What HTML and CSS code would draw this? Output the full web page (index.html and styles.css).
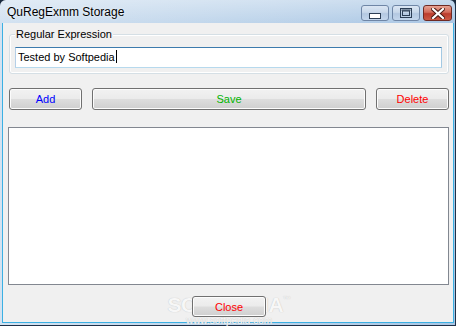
FILE: index.html
```html
<!DOCTYPE html>
<html lang="en">
<head>
    <meta charset="UTF-8">
    <title>QuRegExmm Storage</title>
    <link rel="stylesheet" href="styles.css">
</head>
<body>
    <div class="window">
        <div class="titlebar">
            <span class="title">QuRegExmm Storage</span>
            <div class="caption-buttons">
                <div class="cap-btn">
                    <svg width="12" height="6" viewBox="0 0 12 6"><rect x="0.5" y="0.5" width="11" height="5" fill="#fff" stroke="#2c3e55"/></svg>
                </div>
                <div class="cap-btn">
                    <svg width="12" height="10" viewBox="0 0 12 10"><rect x="0.5" y="0.5" width="11" height="9" fill="none" stroke="#2c3e55"/><rect x="2.5" y="3" width="7" height="4.5" fill="none" stroke="#2c3e55"/><rect x="1.5" y="1.5" width="9" height="1.2" fill="#2c3e55"/></svg>
                </div>
                <div class="cap-btn close-cap">
                    <svg width="14" height="11" viewBox="0 0 14 11"><path d="M2 1 L12 10 M12 1 L2 10" stroke="#4a1a14" stroke-width="4.2" stroke-linecap="square"/><path d="M2 1 L12 10 M12 1 L2 10" stroke="#fff" stroke-width="2.2" stroke-linecap="square"/></svg>
                </div>
            </div>
        </div>

        <div class="client">
            <fieldset class="group">
                <legend>Regular Expression</legend>
                <div class="textbox">Tested by Softpedia<span class="caret"></span></div>
            </fieldset>

            <div class="button-row">
                <button class="btn btn-add">Add</button>
                <button class="btn btn-save">Save</button>
                <button class="btn btn-delete">Delete</button>
            </div>

            <div class="listbox"></div>

            <div class="footer">
                <div class="watermark">
                    <span class="wm-logo">SOFTPEDIA<sup>™</sup></span>
                    <span class="wm-url">www.softpedia.com</span>
                </div>
                <button class="btn btn-close">Close</button>
            </div>
        </div>
    </div>
</body>
</html>
```

FILE: styles.css
```css
body {
    margin: 0;
    background-color: #1b2a3d;
    font-family: "Liberation Sans", Arial, sans-serif;
    font-size: 11px;
}
.window {
    width: 456px;
    height: 326px;
    box-sizing: border-box;
    display: flex;
    flex-direction: column;
    background: linear-gradient(to right, #d3e2f1, #bcd3ea 60%, #a9c6e4);
    border-right: 1px solid #1e3048;
    border-bottom: 1px solid #1e3048;
    border-radius: 6px 6px 0 0;
}
.titlebar {
    height: 23px;
    display: flex;
    align-items: flex-start;
    justify-content: space-between;
    background: linear-gradient(to bottom, rgba(255,255,255,0.35), rgba(255,255,255,0));
    border-radius: 6px 6px 0 0;
}
.title {
    font-size: 12px;
    color: #000;
    margin: 5px 0 0 7px;
    text-shadow: 0 0 3px rgba(255,255,255,0.8);
}
.caption-buttons {
    display: flex;
    gap: 3px;
    margin: 5px 3px 0 0;
}
.cap-btn {
    width: 26px;
    height: 14px;
    border: 1px solid #6f86a6;
    border-radius: 3px;
    background: linear-gradient(to bottom, #dbe6f3 0%, #c7d7ea 45%, #b3c8e1 55%, #c3d6ec 100%);
    display: flex;
    align-items: center;
    justify-content: center;
}
.cap-btn:first-child svg {
    margin-top: 5px;
}
.close-cap {
    width: 27px;
    border-color: #6e2a24;
    background: linear-gradient(to bottom, #e7a394 0%, #d26a59 45%, #bb3c2d 55%, #cc5a45 100%);
}

.client {
    flex: 1;
    display: flex;
    flex-direction: column;
    margin: 0 1px 2px 2px;
    padding: 5px 4px 5px 6px;
    background-color: #f0f0f0;
    border: 1px solid #3bb0e3;
    border-top: none;
}

.group {
    margin: 0;
    padding: 6px 6px 5px 5px;
    border: 1px solid #d5dfe5;
    border-radius: 3px;
    box-shadow: inset 0 0 0 1px #fff;
}
.group legend {
    padding: 0 1px;
    line-height: 13px;
    color: #000;
    background-color: #f0f0f0;
}
.textbox {
    height: 21px;
    box-sizing: border-box;
    padding: 0 0 0 2px;
    line-height: 19px;
    background-color: #fff;
    border: 1px solid;
    border-color: #3d7bad #a4c9e3 #b7d9ed #b5cfe7;
    color: #000;
    white-space: nowrap;
}
.caret {
    display: inline-block;
    width: 1px;
    height: 13px;
    margin-left: 1px;
    vertical-align: -2px;
    background-color: #000;
}

.button-row {
    display: flex;
    gap: 10px;
    margin-top: 14px;
}
.btn {
    height: 22px;
    width: 73px;
    padding: 0;
    font-family: "Liberation Sans", Arial, sans-serif;
    font-size: 11px;
    border: 1px solid #707070;
    border-radius: 3px;
    background: linear-gradient(to bottom, #f2f2f2 0%, #ebebeb 48%, #dddddd 52%, #cfcfcf 100%);
    box-shadow: inset 0 0 0 1px #fcfcfc;
}
.btn-add {
    color: #0000ff;
}
.btn-save {
    flex: 1;
    color: #00b400;
}
.btn-delete {
    color: #ff0000;
}

.listbox {
    height: 158px;
    box-sizing: border-box;
    margin: 17px 0 0 -1px;
    background-color: #fff;
    border: 1px solid #828790;
}

.footer {
    position: relative;
    display: flex;
    justify-content: center;
    margin-top: 11px;
}
.btn-close {
    position: relative;
    width: 74px;
    height: 21px;
    color: #ff0000;
}
.watermark {
    position: absolute;
    left: 0;
    right: 0;
    top: -6px;
    display: flex;
    flex-direction: column;
    align-items: center;
    color: #f7f7f7;
    text-shadow: 0 0 1px #b9b9b9;
}
.wm-logo {
    font-size: 21px;
    font-weight: bold;
    line-height: 20px;
    letter-spacing: -0.5px;
}
.wm-logo sup {
    font-size: 8px;
    vertical-align: 10px;
}
.wm-url {
    font-size: 10px;
    line-height: 10px;
    margin-top: 1px;
}
```
